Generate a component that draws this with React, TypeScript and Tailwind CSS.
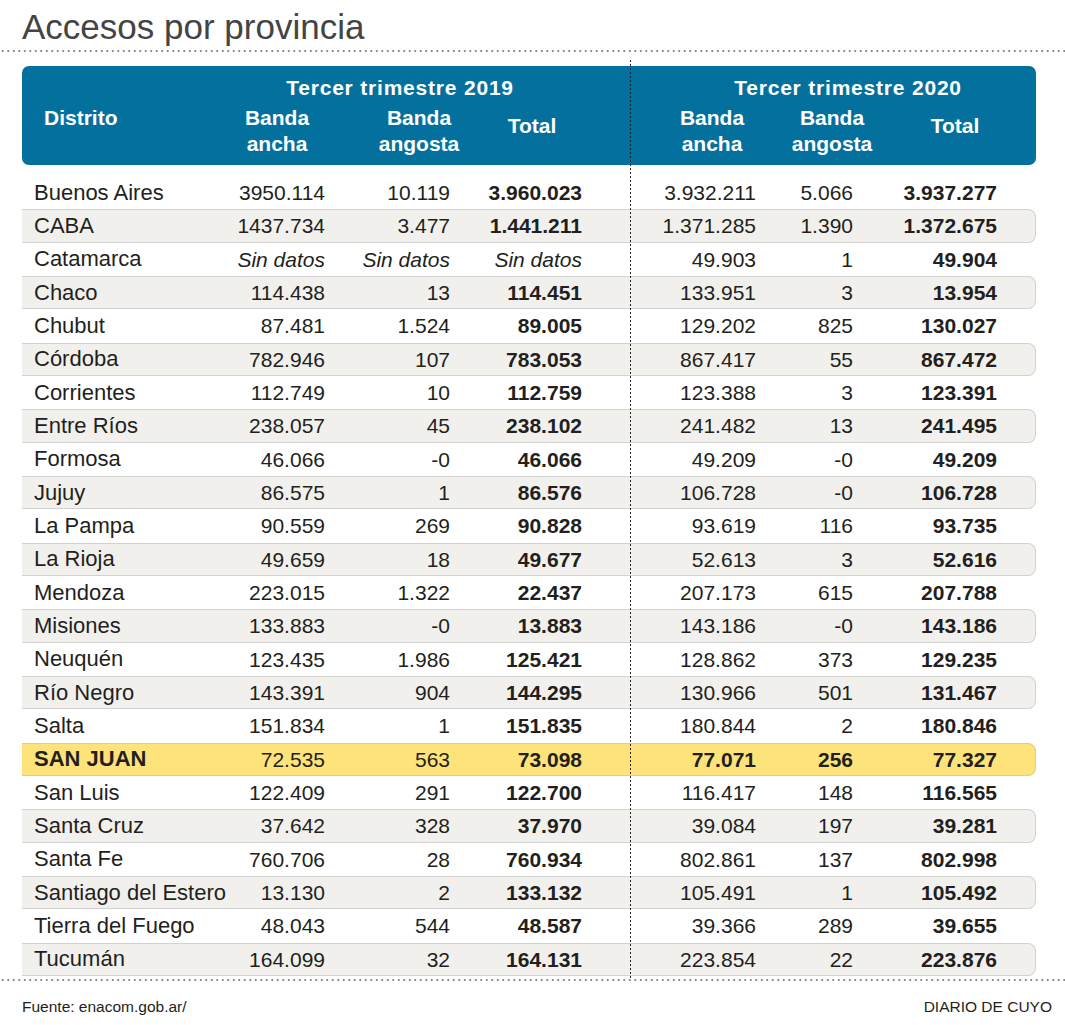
type Row = {
  name: string;
  a19: string;
  b19: string;
  t19: string;
  a20: string;
  b20: string;
  t20: string;
};

const rows: Row[] = [
  { name: "Buenos Aires", a19: "3950.114", b19: "10.119", t19: "3.960.023", a20: "3.932.211", b20: "5.066", t20: "3.937.277" },
  { name: "CABA", a19: "1437.734", b19: "3.477", t19: "1.441.211", a20: "1.371.285", b20: "1.390", t20: "1.372.675" },
  { name: "Catamarca", a19: "Sin datos", b19: "Sin datos", t19: "Sin datos", a20: "49.903", b20: "1", t20: "49.904" },
  { name: "Chaco", a19: "114.438", b19: "13", t19: "114.451", a20: "133.951", b20: "3", t20: "13.954" },
  { name: "Chubut", a19: "87.481", b19: "1.524", t19: "89.005", a20: "129.202", b20: "825", t20: "130.027" },
  { name: "Córdoba", a19: "782.946", b19: "107", t19: "783.053", a20: "867.417", b20: "55", t20: "867.472" },
  { name: "Corrientes", a19: "112.749", b19: "10", t19: "112.759", a20: "123.388", b20: "3", t20: "123.391" },
  { name: "Entre Ríos", a19: "238.057", b19: "45", t19: "238.102", a20: "241.482", b20: "13", t20: "241.495" },
  { name: "Formosa", a19: "46.066", b19: "-0", t19: "46.066", a20: "49.209", b20: "-0", t20: "49.209" },
  { name: "Jujuy", a19: "86.575", b19: "1", t19: "86.576", a20: "106.728", b20: "-0", t20: "106.728" },
  { name: "La Pampa", a19: "90.559", b19: "269", t19: "90.828", a20: "93.619", b20: "116", t20: "93.735" },
  { name: "La Rioja", a19: "49.659", b19: "18", t19: "49.677", a20: "52.613", b20: "3", t20: "52.616" },
  { name: "Mendoza", a19: "223.015", b19: "1.322", t19: "22.437", a20: "207.173", b20: "615", t20: "207.788" },
  { name: "Misiones", a19: "133.883", b19: "-0", t19: "13.883", a20: "143.186", b20: "-0", t20: "143.186" },
  { name: "Neuquén", a19: "123.435", b19: "1.986", t19: "125.421", a20: "128.862", b20: "373", t20: "129.235" },
  { name: "Río Negro", a19: "143.391", b19: "904", t19: "144.295", a20: "130.966", b20: "501", t20: "131.467" },
  { name: "Salta", a19: "151.834", b19: "1", t19: "151.835", a20: "180.844", b20: "2", t20: "180.846" },
  { name: "SAN JUAN", a19: "72.535", b19: "563", t19: "73.098", a20: "77.071", b20: "256", t20: "77.327" },
  { name: "San Luis", a19: "122.409", b19: "291", t19: "122.700", a20: "116.417", b20: "148", t20: "116.565" },
  { name: "Santa Cruz", a19: "37.642", b19: "328", t19: "37.970", a20: "39.084", b20: "197", t20: "39.281" },
  { name: "Santa Fe", a19: "760.706", b19: "28", t19: "760.934", a20: "802.861", b20: "137", t20: "802.998" },
  { name: "Santiago del Estero", a19: "13.130", b19: "2", t19: "133.132", a20: "105.491", b20: "1", t20: "105.492" },
  { name: "Tierra del Fuego", a19: "48.043", b19: "544", t19: "48.587", a20: "39.366", b20: "289", t20: "39.655" },
  { name: "Tucumán", a19: "164.099", b19: "32", t19: "164.131", a20: "223.854", b20: "22", t20: "223.876" },
];

function DottedLine() {
  return (
    <div className="h-[2px] w-full bg-[radial-gradient(circle,#8a8a8a_0.8px,transparent_1px)] bg-[length:5.5px_2px]" />
  );
}

function HeaderCell({ top, bottom }: { top: string; bottom?: string }) {
  return (
    <div className="text-center leading-[26px]">
      {bottom ? (
        <>
          <div>{top}</div>
          <div>{bottom}</div>
        </>
      ) : (
        <div className="pt-[8px]">{top}</div>
      )}
    </div>
  );
}

export default function App() {
  return (
    <div className="relative w-[1065px] h-[1025px] bg-white text-[#231f20] font-['Liberation_Sans',Arial,sans-serif] overflow-hidden">
      <h1 className="pl-[22px] pt-[8px] h-[50px] text-[35px] leading-[38px] text-[#444444]">
        Accesos por provincia
      </h1>
      <DottedLine />

      <div className="ml-[22px] w-[1014px] mt-[14px] h-[99px] rounded-[7px] bg-[#04709e] text-white font-bold text-[21px] flex">
        <div className="w-[195px] pl-[22px] pt-[39px] leading-[26px]">Distrito</div>
        <div className="w-[413px] pt-[10px]">
          <div className="w-[366px] text-center leading-[24px] tracking-[0.8px]">Tercer trimestre 2019</div>
          <div className="mt-[5px] flex">
            <div className="w-[120px]">
              <HeaderCell top="Banda" bottom="ancha" />
            </div>
            <div className="w-[164px]">
              <HeaderCell top="Banda" bottom="angosta" />
            </div>
            <div className="w-[62px]">
              <HeaderCell top="Total" />
            </div>
          </div>
        </div>
        <div className="w-[406px] pt-[10px] pl-[30px]">
          <div className="w-[376px] text-center leading-[24px] tracking-[0.8px]">Tercer trimestre 2020</div>
          <div className="mt-[5px] flex">
            <div className="w-[104px]">
              <HeaderCell top="Banda" bottom="ancha" />
            </div>
            <div className="w-[136px]">
              <HeaderCell top="Banda" bottom="angosta" />
            </div>
            <div className="w-[110px]">
              <HeaderCell top="Total" />
            </div>
          </div>
        </div>
      </div>

      <div className="ml-[22px] w-[1014px] mt-[11px] h-[800px] flex flex-col">
        {rows.map((r, i) => {
          const sj = r.name === "SAN JUAN";
          const striped = i % 2 === 1;
          const sinDatos = r.a19 === "Sin datos";
          return (
            <div
              key={r.name}
              className={`h-[33.333px] grid grid-cols-[208px_95px_125px_132px_174px_97px_144px_1fr] items-center text-[21px] leading-none ${
                sj
                  ? "bg-[#fde37a] border-y border-r border-[#e3cf78] rounded-r-[8px]"
                  : striped
                    ? "bg-[#f1f0ec] border-y border-r border-[#d2d2d0] rounded-r-[8px]"
                    : ""
              }`}
            >
              <div className={`pl-[12px] text-[22px] whitespace-nowrap ${sj ? "font-bold" : ""}`}>{r.name}</div>
              <div className={`text-right whitespace-nowrap ${sinDatos ? "italic" : ""}`}>{r.a19}</div>
              <div className={`text-right whitespace-nowrap ${sinDatos ? "italic" : ""}`}>{r.b19}</div>
              <div className={`text-right whitespace-nowrap ${sinDatos ? "italic" : "font-bold"}`}>{r.t19}</div>
              <div className={`text-right ${sj ? "font-bold" : ""}`}>{r.a20}</div>
              <div className={`text-right ${sj ? "font-bold" : ""}`}>{r.b20}</div>
              <div className="text-right font-bold">{r.t20}</div>
              <div />
            </div>
          );
        })}
      </div>

      <div className="mt-[3px]">
        <DottedLine />
      </div>

      <div className="flex justify-between items-center pl-[22px] pr-[13px] pt-[17px] text-[15.5px] leading-[18px] text-[#231f20]">
        <span>Fuente: enacom.gob.ar/</span>
        <span>DIARIO DE CUYO</span>
      </div>

      <div className="absolute left-[630px] top-[60px] h-[918px] w-px bg-[linear-gradient(to_bottom,#222_2px,transparent_2px)] bg-[length:1px_4px]" />
    </div>
  );
}
